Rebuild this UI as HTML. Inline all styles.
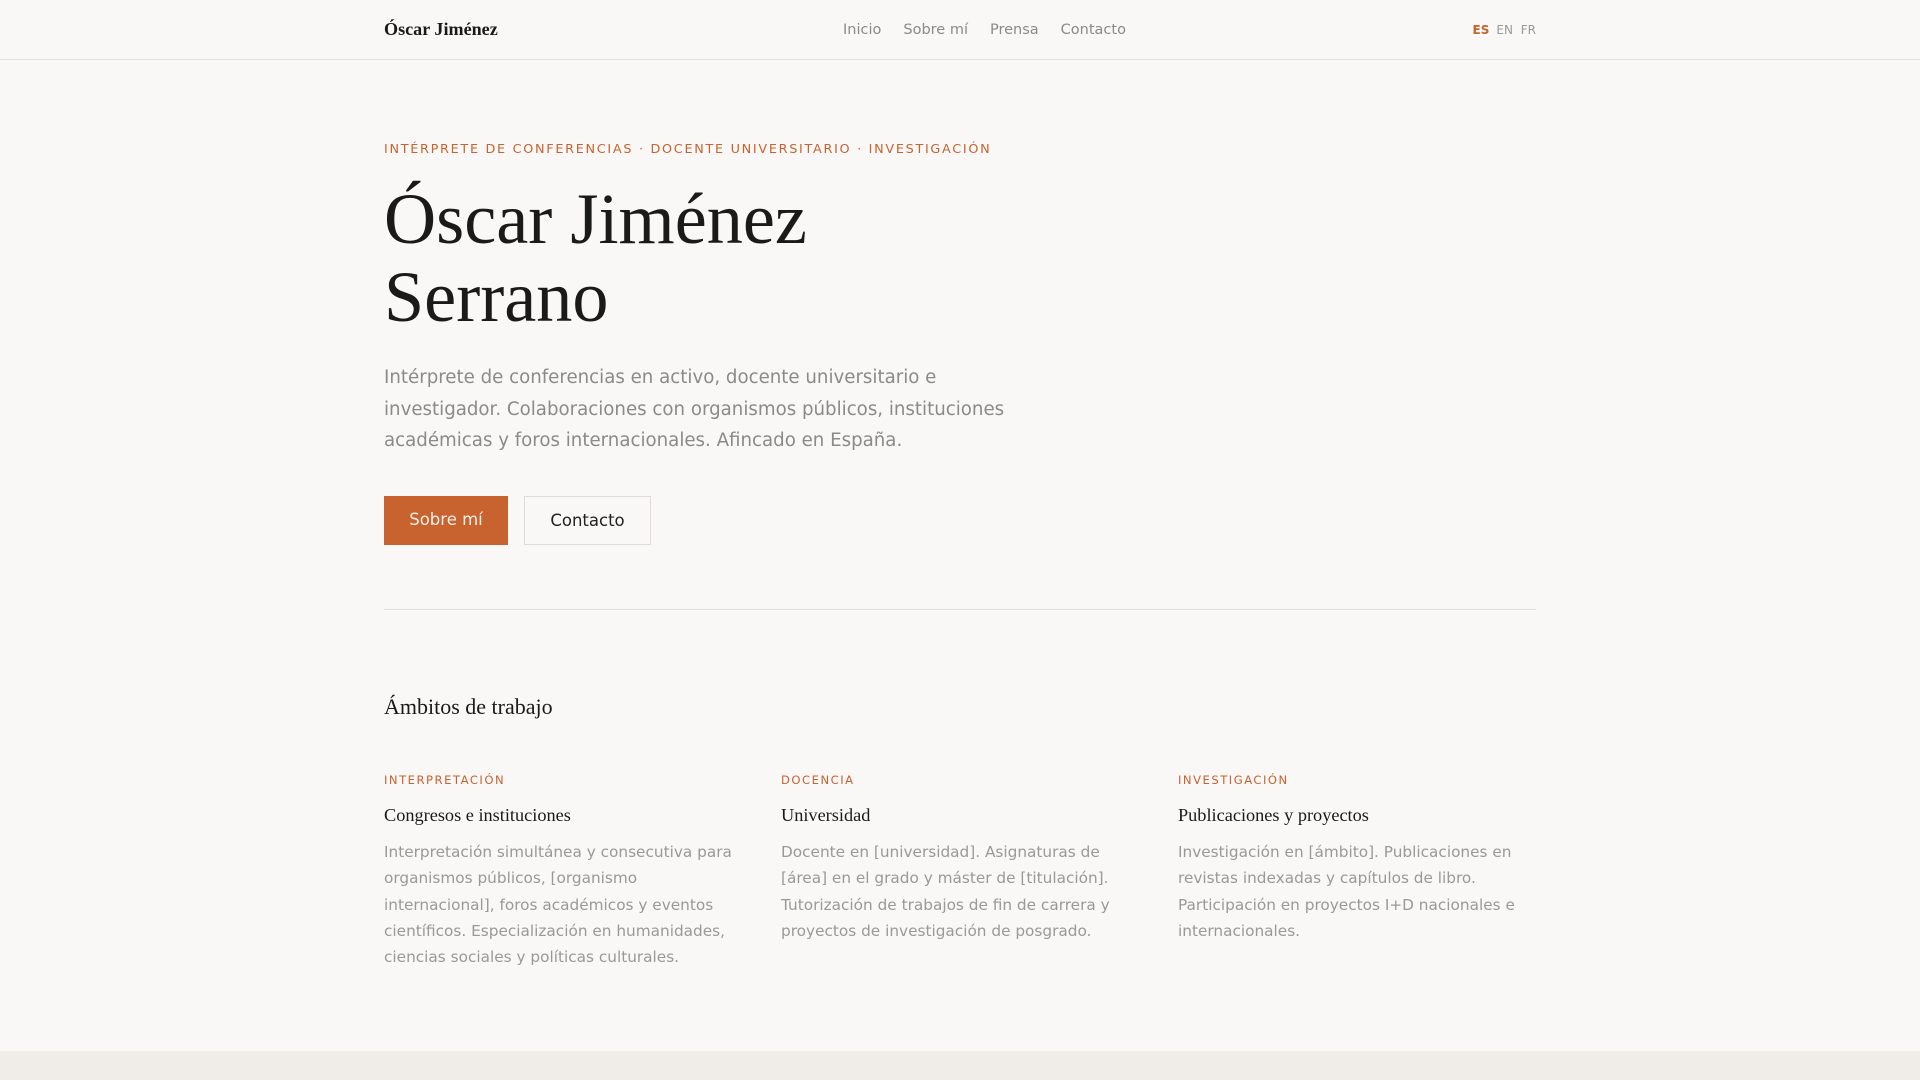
<!DOCTYPE html>
<html><head><meta charset="utf-8"><style>
*{margin:0;padding:0;box-sizing:border-box}
body{width:1920px;height:1080px;overflow:hidden;background:#f9f8f6;font-family:"DejaVu Sans","Liberation Sans",sans-serif;color:#1a1a1a;position:relative}
.serif{font-family:"Liberation Serif",serif}
header{height:60px;border-bottom:1px solid #e2e0dc;position:relative}
.logo{position:absolute;left:384px;top:19px;font-size:18.1px;font-weight:bold}
nav{position:absolute;left:843px;top:22px;font-size:14.5px;color:#8a8a8a}
nav span{margin-right:22px}
.lang{position:absolute;right:384px;top:23px;font-size:12px;color:#999}
.lang b{color:#c8622f;margin-right:7px}
.lang span{margin-left:4px}
.eyebrow{position:absolute;left:384px;top:142px;font-size:12.8px;letter-spacing:1.7px;color:#c8622f}
h1{position:absolute;left:384px;top:180px;font-weight:normal;font-size:72.2px;line-height:78px}
.lead{position:absolute;left:384px;top:362px;width:630px;font-size:18.2px;line-height:31.5px;color:#8a8a8a}
.btn{position:absolute;top:496px;height:49px;font-size:16.5px;line-height:47px;text-align:center}
.b1{left:384px;width:124px;background:#c8622f;color:#fbeee6}
.b2{left:524px;width:127px;border:1px solid #e0ddd6;color:#222}
.rule{position:absolute;left:384px;width:1152px;top:609px;border-top:1px solid #e2e0dc}
h2{position:absolute;left:384px;top:694px;font-weight:normal;font-size:22px}
.col{position:absolute;top:773px;width:360px}
.col .l{font-size:11.6px;letter-spacing:1.5px;color:#c8622f}
.col .t{font-size:18.3px;margin-top:18px}
.col p{font-size:15.3px;line-height:26.3px;color:#999;margin-top:13px}
footer{position:absolute;left:0;top:1051px;width:1920px;height:29px;background:#f0ede8}
</style></head><body>
<header>
<div class="logo serif">Óscar Jiménez</div>
<nav><span>Inicio</span><span>Sobre mí</span><span>Prensa</span><span>Contacto</span></nav>
<div class="lang"><b>ES</b>EN <span>FR</span></div>
</header>
<div class="eyebrow">INTÉRPRETE DE CONFERENCIAS · DOCENTE UNIVERSITARIO · INVESTIGACIÓN</div>
<h1 class="serif">Óscar Jiménez<br>Serrano</h1>
<div class="lead">Intérprete de conferencias en activo, docente universitario e investigador. Colaboraciones con organismos públicos, instituciones académicas y foros internacionales. Afincado en España.</div>
<div class="btn b1">Sobre mí</div>
<div class="btn b2">Contacto</div>
<div class="rule"></div>
<h2 class="serif">Ámbitos de trabajo</h2>
<div class="col" style="left:384px"><div class="l">INTERPRETACIÓN</div><div class="t serif">Congresos e instituciones</div><p>Interpretación simultánea y consecutiva para organismos públicos, [organismo internacional], foros académicos y eventos científicos. Especialización en humanidades, ciencias sociales y políticas culturales.</p></div>
<div class="col" style="left:781px"><div class="l">DOCENCIA</div><div class="t serif">Universidad</div><p>Docente en [universidad]. Asignaturas de [área] en el grado y máster de [titulación]. Tutorización de trabajos de fin de carrera y proyectos de investigación de posgrado.</p></div>
<div class="col" style="left:1178px"><div class="l">INVESTIGACIÓN</div><div class="t serif">Publicaciones y proyectos</div><p>Investigación en [ámbito]. Publicaciones en revistas indexadas y capítulos de libro. Participación en proyectos I+D nacionales e internacionales.</p></div>
<footer></footer>
</body></html>
